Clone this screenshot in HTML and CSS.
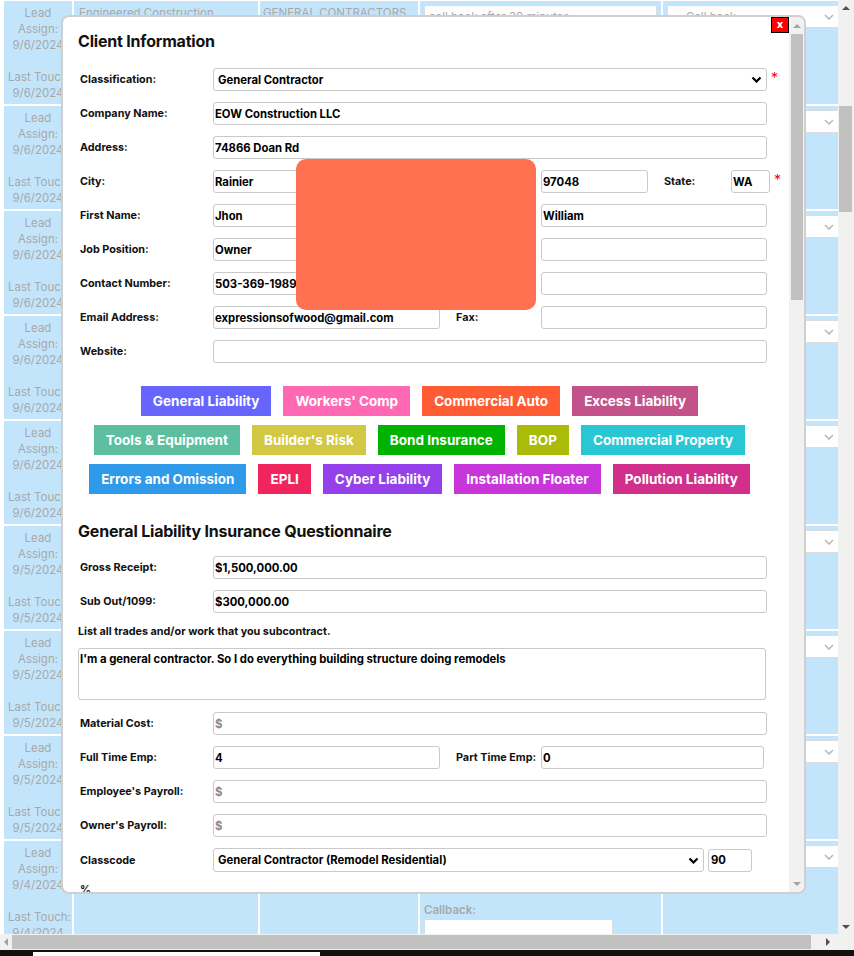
FILE: index.html
```html
<!DOCTYPE html>
<html lang="en">
<head>
  <meta charset="UTF-8">
  <title>Leads - Client Information</title>
  <link rel="stylesheet" href="styles.css">
</head>
<body>
<div class="screen">
  <div class="viewport">
    <table class="leads">
      <colgroup>
        <col class="c-lead"><col class="c-company"><col class="c-type"><col class="c-notes"><col class="c-status">
      </colgroup>
      <tr>
        <td class="lead-cell"><div>Lead</div><div>Assign:</div><div>9/6/2024</div><div>&nbsp;</div><div>Last Touch:</div><div>9/6/2024</div></td>
        <td class="company-cell">Engineered Construction</td>
        <td class="type-cell">General Contractors</td>
        <td class="notes-cell"><input class="bg-input" value="call back after 30 minutes"><div class="cb-label">Callback:</div><input class="bg-input cb-input"></td>
        <td class="status-cell"><div class="bg-select">Call back<svg class="bg-chev" width="10" height="6" viewBox="0 0 10 6"><path d="M1 1l4 4 4-4" fill="none" stroke="#b9b9b9" stroke-width="1.6"/></svg></div></td>
      </tr>
      <tr>
        <td class="lead-cell"><div>Lead</div><div>Assign:</div><div>9/6/2024</div><div>&nbsp;</div><div>Last Touch:</div><div>9/6/2024</div></td>
        <td class="company-cell"></td><td class="type-cell"></td>
        <td class="notes-cell"><input class="bg-input"><div class="cb-label">Callback:</div><input class="bg-input cb-input"></td>
        <td class="status-cell"><div class="bg-select">Call back<svg class="bg-chev" width="10" height="6" viewBox="0 0 10 6"><path d="M1 1l4 4 4-4" fill="none" stroke="#b9b9b9" stroke-width="1.6"/></svg></div></td>
      </tr>
      <tr>
        <td class="lead-cell"><div>Lead</div><div>Assign:</div><div>9/6/2024</div><div>&nbsp;</div><div>Last Touch:</div><div>9/6/2024</div></td>
        <td class="company-cell"></td><td class="type-cell"></td>
        <td class="notes-cell"><input class="bg-input"><div class="cb-label">Callback:</div><input class="bg-input cb-input"></td>
        <td class="status-cell"><div class="bg-select">Call back<svg class="bg-chev" width="10" height="6" viewBox="0 0 10 6"><path d="M1 1l4 4 4-4" fill="none" stroke="#b9b9b9" stroke-width="1.6"/></svg></div></td>
      </tr>
      <tr>
        <td class="lead-cell"><div>Lead</div><div>Assign:</div><div>9/6/2024</div><div>&nbsp;</div><div>Last Touch:</div><div>9/6/2024</div></td>
        <td class="company-cell"></td><td class="type-cell"></td>
        <td class="notes-cell"><input class="bg-input"><div class="cb-label">Callback:</div><input class="bg-input cb-input"></td>
        <td class="status-cell"><div class="bg-select">Call back<svg class="bg-chev" width="10" height="6" viewBox="0 0 10 6"><path d="M1 1l4 4 4-4" fill="none" stroke="#b9b9b9" stroke-width="1.6"/></svg></div></td>
      </tr>
      <tr>
        <td class="lead-cell"><div>Lead</div><div>Assign:</div><div>9/6/2024</div><div>&nbsp;</div><div>Last Touch:</div><div>9/6/2024</div></td>
        <td class="company-cell"></td><td class="type-cell"></td>
        <td class="notes-cell"><input class="bg-input"><div class="cb-label">Callback:</div><input class="bg-input cb-input"></td>
        <td class="status-cell"><div class="bg-select">Call back<svg class="bg-chev" width="10" height="6" viewBox="0 0 10 6"><path d="M1 1l4 4 4-4" fill="none" stroke="#b9b9b9" stroke-width="1.6"/></svg></div></td>
      </tr>
      <tr>
        <td class="lead-cell"><div>Lead</div><div>Assign:</div><div>9/5/2024</div><div>&nbsp;</div><div>Last Touch:</div><div>9/5/2024</div></td>
        <td class="company-cell"></td><td class="type-cell"></td>
        <td class="notes-cell"><input class="bg-input"><div class="cb-label">Callback:</div><input class="bg-input cb-input"></td>
        <td class="status-cell"><div class="bg-select">Call back<svg class="bg-chev" width="10" height="6" viewBox="0 0 10 6"><path d="M1 1l4 4 4-4" fill="none" stroke="#b9b9b9" stroke-width="1.6"/></svg></div></td>
      </tr>
      <tr>
        <td class="lead-cell"><div>Lead</div><div>Assign:</div><div>9/5/2024</div><div>&nbsp;</div><div>Last Touch:</div><div>9/5/2024</div></td>
        <td class="company-cell"></td><td class="type-cell"></td>
        <td class="notes-cell"><input class="bg-input"><div class="cb-label">Callback:</div><input class="bg-input cb-input"></td>
        <td class="status-cell"><div class="bg-select">Call back<svg class="bg-chev" width="10" height="6" viewBox="0 0 10 6"><path d="M1 1l4 4 4-4" fill="none" stroke="#b9b9b9" stroke-width="1.6"/></svg></div></td>
      </tr>
      <tr>
        <td class="lead-cell"><div>Lead</div><div>Assign:</div><div>9/5/2024</div><div>&nbsp;</div><div>Last Touch:</div><div>9/5/2024</div></td>
        <td class="company-cell"></td><td class="type-cell"></td>
        <td class="notes-cell"><input class="bg-input"><div class="cb-label">Callback:</div><input class="bg-input cb-input"></td>
        <td class="status-cell"><div class="bg-select">Call back<svg class="bg-chev" width="10" height="6" viewBox="0 0 10 6"><path d="M1 1l4 4 4-4" fill="none" stroke="#b9b9b9" stroke-width="1.6"/></svg></div></td>
      </tr>
      <tr>
        <td class="lead-cell"><div>Lead</div><div>Assign:</div><div>9/4/2024</div><div>&nbsp;</div><div>Last Touch:</div><div>9/4/2024</div></td>
        <td class="company-cell"></td><td class="type-cell"></td>
        <td class="notes-cell"><input class="bg-input"><div class="cb-label">Callback:</div><input class="bg-input cb-input"></td>
        <td class="status-cell"><div class="bg-select">Call back<svg class="bg-chev" width="10" height="6" viewBox="0 0 10 6"><path d="M1 1l4 4 4-4" fill="none" stroke="#b9b9b9" stroke-width="1.6"/></svg></div></td>
      </tr>
    </table>

    <div class="modal">
      <div class="modal-body">
        <h2 class="title">Client Information</h2>

        <div class="row">
          <label class="lbl">Classification:</label>
          <div class="select">
            <select><option>General Contractor</option></select>
            <svg class="chev" width="11" height="7" viewBox="0 0 11 7"><path d="M1.5 1.5l4 4 4-4" fill="none" stroke="#000" stroke-width="2.2"/></svg>
          </div>
          <span class="req">*</span>
        </div>
        <div class="row">
          <label class="lbl">Company Name:</label>
          <input class="inp" value="EOW Construction LLC">
        </div>
        <div class="row">
          <label class="lbl">Address:</label>
          <input class="inp" value="74866 Doan Rd">
        </div>
        <div class="row">
          <label class="lbl">City:</label>
          <input class="inp half" value="Rainier">
          <label class="lbl lbl2">Zip Code:</label>
          <input class="inp zip" value="97048">
          <label class="lbl lbl-state">State:</label>
          <input class="inp state" value="WA">
          <span class="req">*</span>
        </div>
        <div class="row">
          <label class="lbl">First Name:</label>
          <input class="inp half" value="Jhon">
          <label class="lbl lbl2">Last Name:</label>
          <input class="inp" value="William">
        </div>
        <div class="row">
          <label class="lbl">Job Position:</label>
          <input class="inp half" value="Owner">
          <label class="lbl lbl2">Phone:</label>
          <input class="inp">
        </div>
        <div class="row">
          <label class="lbl">Contact Number:</label>
          <input class="inp half" value="503-369-1989">
          <label class="lbl lbl2">Mobile:</label>
          <input class="inp">
        </div>
        <div class="row">
          <label class="lbl">Email Address:</label>
          <input class="inp half" value="expressionsofwood@gmail.com">
          <label class="lbl lbl2">Fax:</label>
          <input class="inp">
        </div>
        <div class="row">
          <label class="lbl">Website:</label>
          <input class="inp">
        </div>

        <div class="coverage">
          <div class="cov-row">
            <button class="cov gl">General Liability</button>
            <button class="cov wc">Workers' Comp</button>
            <button class="cov ca">Commercial Auto</button>
            <button class="cov xl">Excess Liability</button>
          </div>
          <div class="cov-row">
            <button class="cov te">Tools &amp; Equipment</button>
            <button class="cov br">Builder's Risk</button>
            <button class="cov bi">Bond Insurance</button>
            <button class="cov bop">BOP</button>
            <button class="cov cp">Commercial Property</button>
          </div>
          <div class="cov-row">
            <button class="cov eo">Errors and Omission</button>
            <button class="cov epli">EPLI</button>
            <button class="cov cy">Cyber Liability</button>
            <button class="cov inf">Installation Floater</button>
            <button class="cov pl">Pollution Liability</button>
          </div>
        </div>

        <h2 class="title section-title">General Liability Insurance Questionnaire</h2>

        <div class="row">
          <label class="lbl">Gross Receipt:</label>
          <input class="inp" value="$1,500,000.00">
        </div>
        <div class="row">
          <label class="lbl">Sub Out/1099:</label>
          <input class="inp" value="$300,000.00">
        </div>
        <p class="note">List all trades and/or work that you subcontract.</p>
        <textarea class="area">I'm a general contractor. So I do everything building structure doing remodels</textarea>
        <div class="row">
          <label class="lbl">Material Cost:</label>
          <input class="inp" placeholder="$">
        </div>
        <div class="row">
          <label class="lbl">Full Time Emp:</label>
          <input class="inp half" value="4">
          <label class="lbl lbl2">Part Time Emp:</label>
          <input class="inp part" value="0">
        </div>
        <div class="row">
          <label class="lbl">Employee's Payroll:</label>
          <input class="inp" placeholder="$">
        </div>
        <div class="row">
          <label class="lbl">Owner's Payroll:</label>
          <input class="inp" placeholder="$">
        </div>
        <div class="row row-code">
          <label class="lbl">Classcode</label>
          <div class="select code-select">
            <select><option>General Contractor (Remodel Residential)</option></select>
            <svg class="chev" width="11" height="7" viewBox="0 0 11 7"><path d="M1.5 1.5l4 4 4-4" fill="none" stroke="#000" stroke-width="2.2"/></svg>
          </div>
          <input class="inp pct" value="90">
        </div>
        <div class="pct-label">%</div>

        <button class="close">x</button>
      </div>
      <div class="modal-scroll">
        <div class="sb-btn"><span class="arr-up"></span></div>
        <div class="sb-thumb"></div>
        <div class="sb-track"></div>
        <div class="sb-btn"><span class="arr-down"></span></div>
      </div>
    </div>

    <div class="redact"></div>
  </div>

  <div class="vscroll">
    <div class="vs-btn"><span class="arr-up dark"></span></div>
    <div class="vs-space"></div>
    <div class="vs-thumb"></div>
    <div class="sb-track"></div>
    <div class="vs-btn"><span class="arr-down dark"></span></div>
  </div>
  <div class="hscroll">
    <div class="hs-btn"><span class="arr-left"></span></div>
    <div class="hs-thumb"></div>
    <div class="sb-track"></div>
    <div class="hs-btn"><span class="arr-right"></span></div>
  </div>
  <div class="corner"></div>
  <div class="taskbar"><div class="task-item"></div></div>
</div>
</body>
</html>
```

FILE: styles.css
```css
body {
  margin: 0;
  font-family: "Inter", "Liberation Sans", sans-serif;
  overflow: hidden;
  background: #fff;
}
.screen {
  display: grid;
  grid-template-columns: 838px 16px;
  grid-template-rows: 934px 16px 6px;
  width: 854px;
  height: 956px;
}
.viewport {
  position: relative;
  overflow: hidden;
  background: #fff;
}

/* background leads table */
.leads {
  border-collapse: separate;
  border-spacing: 2px;
  margin: -1px 0 0 2px;
  table-layout: fixed;
  width: 843px;
}
.c-lead { width: 68px; }
.c-company { width: 184px; }
.c-type { width: 158px; }
.c-notes { width: 241px; }
.c-status { width: 180px; }
.leads td {
  background: #c3e5fc;
  height: 103px;
  box-sizing: border-box;
  vertical-align: top;
  padding: 0;
  color: #a8a8a8;
  font-size: 11.5px;
  line-height: 16px;
  overflow: hidden;
}
.leads td.lead-cell {
  text-align: center;
  padding: 4px 4px 0;
  white-space: nowrap;
}
.leads td.company-cell { padding: 4px 5px 0; white-space: nowrap; }
.leads td.type-cell { padding: 4px 3px 0; text-transform: uppercase; white-space: nowrap; }
.leads td.notes-cell { padding: 4px 4px 0; }
.leads td.status-cell { padding: 4px 0 0 4px; }
.bg-input {
  display: block;
  width: 233px;
  height: 23px;
  box-sizing: border-box;
  border: 1px solid #dcdcdc;
  border-radius: 2px;
  background: #fff;
  color: #aaa;
  font: inherit;
  padding: 0 4px;
}
.cb-label {
  margin-top: 34px;
  font-weight: 600;
}
.cb-input {
  margin-top: 1px;
  width: 189px;
}
.bg-select {
  position: relative;
  height: 23px;
  box-sizing: border-box;
  background: #fff;
  border: 1px solid #dcdcdc;
  padding: 3px 0 0 18px;
  color: #aaa;
}
.bg-chev {
  position: absolute;
  left: 156px;
  top: 8px;
}

/* modal */
.modal {
  position: absolute;
  left: 61px;
  top: 15px;
  width: 745px;
  height: 879px;
  box-sizing: border-box;
  border: 2px solid #cfcfcf;
  border-radius: 8px;
  background: #fff;
  display: flex;
  overflow: hidden;
}
.modal-body {
  flex: 1;
  min-width: 0;
  padding: 14px 22px 0 15px;
  color: #111;
}
.title {
  margin: 0 0 17px;
  font-size: 16px;
  line-height: 20px;
  font-weight: 700;
  letter-spacing: -0.2px;
}
.section-title {
  margin: 27px 0 15px;
}
.row {
  display: flex;
  align-items: center;
  height: 23px;
  margin-bottom: 11px;
}
.lbl {
  flex: none;
  width: 135px;
  box-sizing: border-box;
  padding-left: 2px;
  font-size: 10.8px;
  font-weight: 700;
  white-space: nowrap;
}
.lbl2 {
  width: 85px;
  margin-left: 16px;
  padding-left: 0;
  overflow: hidden;
}
.lbl-state {
  width: 67px;
  margin-left: 16px;
  padding-left: 0;
}
.inp {
  flex: 1;
  min-width: 0;
  height: 23px;
  box-sizing: border-box;
  border: 1px solid #c9c9c9;
  border-radius: 3px;
  padding: 0 1px;
  font-family: inherit;
  font-size: 11.3px;
  font-weight: 700;
  color: #000;
  background: #fff;
}
.inp::placeholder {
  color: #8a8a8a;
}
.half { flex: none; width: 227px; }
.zip { flex: none; width: 107px; }
.state { flex: none; width: 39px; }
.part { flex: none; width: 223px; }
.pct { flex: none; width: 44px; margin-left: 4px; padding-left: 2px; }
.req {
  flex: none;
  width: 7px;
  margin: -4px -11px 0 4px;
  color: #f00;
  font-size: 14px;
}
.select {
  flex: 1;
  position: relative;
  display: flex;
  height: 23px;
}
.select select {
  appearance: none;
  width: 100%;
  height: 100%;
  border: 1px solid #c9c9c9;
  border-radius: 3px;
  background: #fff;
  padding: 0 0 0 4px;
  font-family: inherit;
  font-size: 11.3px;
  font-weight: 700;
  color: #000;
}
.chev {
  position: absolute;
  right: 5px;
  top: 8px;
  pointer-events: none;
}
.row-code { height: 24px; margin-bottom: 10px; }
.code-select { flex: none; width: 491px; height: 24px; }
.code-select .chev { top: 9px; }

/* coverage buttons */
.coverage {
  display: flex;
  flex-direction: column;
  gap: 9px;
  margin: 23px 6px 0 0;
}
.cov-row {
  display: flex;
  justify-content: center;
  gap: 12px;
}
.cov {
  height: 30px;
  border: none;
  padding: 0 12px;
  color: #fff;
  font-family: inherit;
  font-size: 13.5px;
  font-weight: 700;
}
.gl { background: #6666ff; }
.wc { background: #ff69b4; }
.ca { background: #ff5c33; }
.xl { background: #c4528a; }
.te { background: #5bbfa0; }
.br { background: #d3c843; }
.bi { background: #00b300; }
.bop { background: #aabb0a; }
.cp { background: #29c7d4; }
.eo { background: #2e9ae9; }
.epli { background: #f0255d; }
.cy { background: #9540ea; }
.inf { background: #c835d9; }
.pl { background: #d12f8b; }

.note {
  margin: 0 0 8px;
  font-size: 10.8px;
  font-weight: 700;
  line-height: 16px;
}
.area {
  display: block;
  width: 688px;
  height: 52px;
  box-sizing: border-box;
  margin: 0 0 12px;
  border: 1px solid #c9c9c9;
  border-radius: 3px;
  padding: 3px 1px;
  resize: none;
  font-family: inherit;
  font-size: 11.3px;
  font-weight: 700;
  color: #000;
}
.pct-label {
  padding-left: 2px;
  font-size: 10.8px;
  font-weight: 700;
  line-height: 16px;
}
.close {
  position: absolute;
  top: 0;
  right: 15px;
  width: 18px;
  height: 16px;
  padding: 0;
  border: 1px solid #000;
  background: #f00;
  color: #fff;
  font-family: "DejaVu Sans", sans-serif;
  font-size: 10px;
  font-weight: 700;
  line-height: 12px;
}

/* scrollbars */
.modal-scroll,
.vscroll {
  display: flex;
  flex-direction: column;
  background: #f1f1f1;
}
.modal-scroll { width: 15px; flex: none; }
.sb-btn {
  height: 17px;
  display: flex;
  align-items: center;
  justify-content: center;
}
.sb-thumb {
  height: 266px;
  margin: 0 1px 0 2px;
  background: #c1c1c1;
}
.sb-track { flex: 1; }
.vs-btn {
  height: 15px;
  display: flex;
  align-items: center;
  justify-content: center;
}
.vs-space { height: 91px; }
.vs-thumb {
  height: 106px;
  margin: 0 2px 0 1px;
  background: #c1c1c1;
}
.hscroll {
  display: flex;
  background: #f1f1f1;
  padding: 1px 0;
}
.hs-btn {
  width: 12px;
  display: flex;
  align-items: center;
  justify-content: center;
}
.hs-thumb {
  width: 799px;
  background: #c1c1c1;
}
.hscroll .hs-btn:last-child { width: 20px; }
.corner { background: #f1f1f1; }
.arr-up,
.arr-down {
  width: 0;
  height: 0;
  border-left: 4px solid transparent;
  border-right: 4px solid transparent;
}
.arr-up { border-bottom: 4px solid #a3a3a3; }
.arr-down { border-top: 4px solid #a3a3a3; }
.arr-up.dark { border-bottom-color: #505050; }
.arr-down.dark { border-top-color: #505050; }
.arr-left,
.arr-right {
  width: 0;
  height: 0;
  border-top: 4px solid transparent;
  border-bottom: 4px solid transparent;
}
.arr-left { border-right: 4px solid #a3a3a3; }
.arr-right { border-left: 4px solid #505050; }
.taskbar {
  grid-column: 1 / 3;
  background: #111;
}
.task-item {
  width: 287px;
  height: 4px;
  margin: 2px 0 0 33px;
  background: #fff;
}

/* redaction block over personal data */
.redact {
  position: absolute;
  left: 296px;
  top: 159px;
  width: 240px;
  height: 151px;
  border-radius: 10px;
  background: #ff7150;
}
```
